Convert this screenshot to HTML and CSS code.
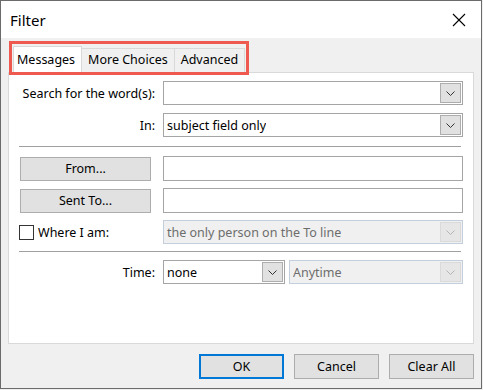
FILE: index.html
```html
<!DOCTYPE html>
<html lang="en">
<head>
    <title>Filter</title>
    <link rel="stylesheet" href="styles.css">
</head>
<body>
    <div class="window">
        <!-- Title Bar -->
        <div class="titlebar">
            <span class="title">Filter</span>
            <svg class="close" width="14" height="14" viewBox="0 0 14 14">
                <path d="M1 1 L13 13 M13 1 L1 13" stroke="#000" stroke-width="1.1" fill="none"/>
            </svg>
        </div>

        <div class="dialog-body">
            <!-- Tabs -->
            <div class="tabs">
                <div class="tab active">Messages</div>
                <div class="tab">More Choices</div>
                <div class="tab">Advanced</div>
            </div>
            <div class="tab-highlight"></div>

            <!-- Tab Panel -->
            <div class="panel">
                <div class="row">
                    <label class="label">Search for the word(s):</label>
                    <div class="combo">
                        <span class="combo-text"></span>
                        <span class="drop"><svg width="9" height="5" viewBox="0 0 9 5"><path d="M0.5 0.5 L4.5 4.5 L8.5 0.5" stroke="#333" fill="none"/></svg></span>
                    </div>
                </div>
                <div class="row">
                    <label class="label">In:</label>
                    <div class="combo">
                        <span class="combo-text">subject field only</span>
                        <span class="drop"><svg width="9" height="5" viewBox="0 0 9 5"><path d="M0.5 0.5 L4.5 4.5 L8.5 0.5" stroke="#333" fill="none"/></svg></span>
                    </div>
                </div>

                <hr class="sep first">

                <div class="row">
                    <button class="btn wide">From...</button>
                    <div class="field"></div>
                </div>
                <div class="row">
                    <button class="btn wide">Sent To...</button>
                    <div class="field"></div>
                </div>
                <div class="row">
                    <label class="check-label"><span class="checkbox"></span>Where I am:</label>
                    <div class="combo disabled">
                        <span class="combo-text">the only person on the To line</span>
                        <span class="drop"><svg width="9" height="5" viewBox="0 0 9 5"><path d="M0.5 0.5 L4.5 4.5 L8.5 0.5" stroke="#b5b5b5" fill="none"/></svg></span>
                    </div>
                </div>

                <hr class="sep second">

                <div class="row">
                    <label class="label">Time:</label>
                    <div class="time-controls">
                        <div class="combo short">
                            <span class="combo-text">none</span>
                            <span class="drop"><svg width="9" height="5" viewBox="0 0 9 5"><path d="M0.5 0.5 L4.5 4.5 L8.5 0.5" stroke="#333" fill="none"/></svg></span>
                        </div>
                        <div class="combo disabled grow">
                            <span class="combo-text">Anytime</span>
                            <span class="drop"><svg width="9" height="5" viewBox="0 0 9 5"><path d="M0.5 0.5 L4.5 4.5 L8.5 0.5" stroke="#b5b5b5" fill="none"/></svg></span>
                        </div>
                    </div>
                </div>
            </div>

            <!-- Footer Buttons -->
            <div class="footer">
                <button class="btn action default">OK</button>
                <button class="btn action">Cancel</button>
                <button class="btn action">Clear All</button>
            </div>
        </div>
    </div>
</body>
</html>
```

FILE: styles.css
```css
/* Global Styles */
* {
    margin: 0;
    padding: 0;
    box-sizing: border-box;
}

body {
    font-family: "Noto Sans", "Open Sans", sans-serif;
    font-size: 12.5px;
    color: #000;
    background-color: #f0f0f0;
    width: 483px;
    height: 390px;
    overflow: hidden;
}

.window {
    width: 482px;
    height: 389px;
    border: 1px solid #6b6b6b;
    background-color: #f0f0f0;
    display: flex;
    flex-direction: column;
}

/* Title Bar */
.titlebar {
    height: 37px;
    background-color: #fff;
    display: flex;
    align-items: center;
    justify-content: space-between;
    padding: 0 15px 0 9px;
}

.title {
    font-size: 15px;
}

.close {
    display: block;
}

/* Body */
.dialog-body {
    flex: 1;
    position: relative;
    padding: 7px 7px 0 7px;
}

.tabs {
    display: flex;
    align-items: flex-end;
    height: 27px;
    padding-left: 5px;
    position: relative;
    z-index: 1;
}

.tab {
    height: 24px;
    padding: 0 6px;
    line-height: 22px;
    border: 1px solid #d9d9d9;
    border-bottom: none;
    border-left: none;
    background-color: #f0f0f0;
}

.tab.active {
    height: 27px;
    line-height: 25px;
    background-color: #fff;
    border-left: 1px solid #d9d9d9;
    padding: 0 6px 0 3px;
    margin-bottom: -1px;
}

/* annotation box over the tab strip */
.tab-highlight {
    position: absolute;
    left: 8px;
    top: 3px;
    width: 240px;
    height: 34px;
    border: 3px solid #ee5a4f;
    z-index: 2;
}

.panel {
    height: 272px;
    background-color: #fff;
    border: 1px solid #d9d9d9;
    padding: 8px 9px 0 10px;
    display: flex;
    flex-direction: column;
    gap: 8px;
}

.row {
    display: grid;
    grid-template-columns: 144px 300px;
    align-items: center;
    height: 24px;
}

.label {
    text-align: right;
    padding-right: 8px;
}

.sep {
    border: none;
    border-top: 1px solid #a0a0a0;
    width: 442px;
}

.sep.first {
    margin: 1px 0 1px;
}

.sep.second {
    margin: -1px 0 0;
}

/* Combo Box */
.combo {
    height: 24px;
    border: 1px solid #a5a5a5;
    background-color: #fff;
    display: flex;
    align-items: center;
    justify-content: space-between;
    padding: 1px 1px 1px 3px;
}

.combo-text {
    white-space: nowrap;
    overflow: hidden;
}

.drop {
    width: 21px;
    height: 20px;
    background-color: #e1e1e1;
    border: 1px solid #adadad;
    display: flex;
    align-items: center;
    justify-content: center;
    flex-shrink: 0;
}

.combo.disabled {
    background-color: #f0f0f0;
    border-color: #c3cfdc;
    color: #6d6d6d;
}

.combo.disabled .drop {
    background-color: #e6e6e6;
    border-color: #dadada;
}

.field {
    height: 25px;
    border: 1px solid #a5a5a5;
    background-color: #fff;
}

.time-controls {
    display: flex;
    gap: 4px;
}

.combo.short {
    width: 122px;
}

.combo.grow {
    flex: 1;
}

/* Buttons */
.btn {
    font-family: inherit;
    font-size: 12.5px;
    color: #000;
    background-color: #e1e1e1;
    border: 1px solid #adadad;
    height: 24px;
    cursor: pointer;
}

.btn.wide {
    width: 131px;
    margin-left: 1px;
}

.check-label {
    display: flex;
    align-items: center;
    gap: 4px;
}

.checkbox {
    width: 15px;
    height: 15px;
    border: 1px solid #333;
    background-color: #fff;
}

.footer {
    display: flex;
    justify-content: flex-end;
    gap: 10px;
    padding: 10px 0 0;
}

.btn.action {
    width: 85px;
    height: 25px;
}

.btn.default {
    border: 2px solid #0078d7;
}
```
